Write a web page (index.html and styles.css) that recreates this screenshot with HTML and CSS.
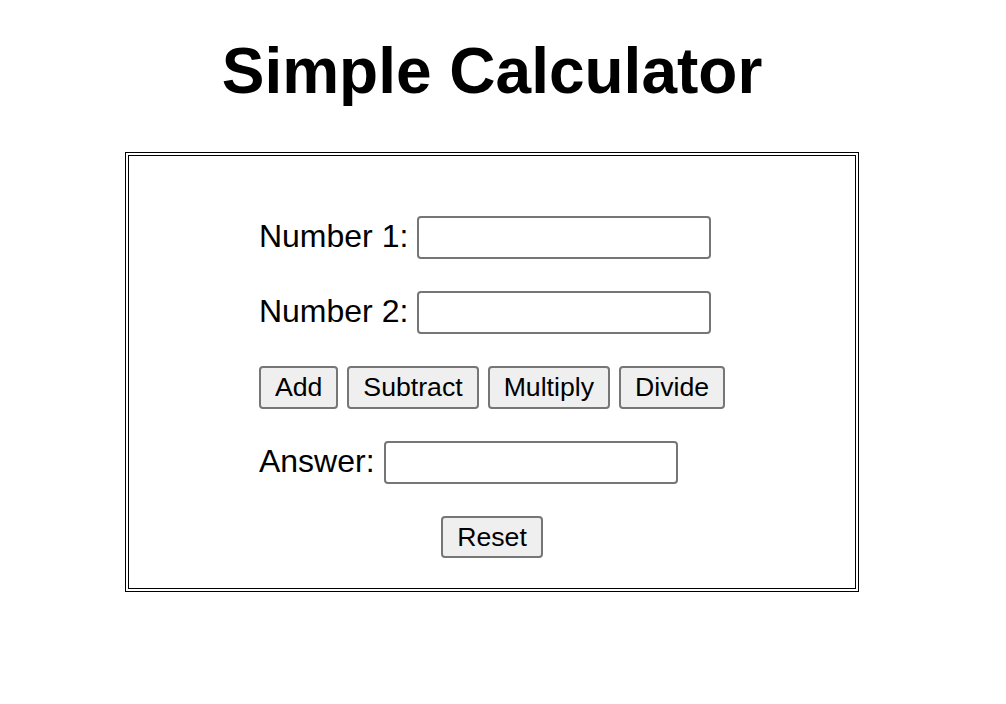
FILE: index.html
```html
<!DOCTYPE html>
<html lang="en">
<head>
<meta charset="utf-8">
<title>Simple Calculator</title>
<link rel="stylesheet" href="styles.css">
</head>
<body>
<div class="page">
  <h1 class="title">Simple Calculator</h1>
  <div class="box">
    <div class="form">
      <div class="row">
        <label class="label" for="n1">Number 1:</label>
        <input class="field" id="n1" type="text">
      </div>
      <div class="row">
        <label class="label" for="n2">Number 2:</label>
        <input class="field" id="n2" type="text">
      </div>
      <div class="row buttons">
        <button class="btn" type="button">Add</button>
        <button class="btn" type="button">Subtract</button>
        <button class="btn" type="button">Multiply</button>
        <button class="btn" type="button">Divide</button>
      </div>
      <div class="row">
        <label class="label" for="ans">Answer:</label>
        <input class="field" id="ans" type="text">
      </div>
      <div class="row reset-row">
        <button class="btn" type="button">Reset</button>
      </div>
    </div>
  </div>
</div>
</body>
</html>
```

FILE: styles.css
```css
html, body {
  margin: 0;
  padding: 0;
  background: #ffffff;
}

body {
  font-family: "Liberation Sans", Arial, sans-serif;
  color: #000000;
}

.page {
  width: 984px;
  display: flex;
  flex-direction: column;
  align-items: center;
}

.title {
  margin: 34px 0 44px;
  font-size: 64px;
  line-height: 74px;
  font-weight: bold;
  text-align: center;
}

.box {
  box-sizing: border-box;
  width: 734px;
  height: 440px;
  border: 4px double #000000;
  padding: 60px 0 0;
  display: flex;
  justify-content: center;
}

.form {
  display: flex;
  flex-direction: column;
  align-items: flex-start;
  gap: 32px;
}

.row {
  display: flex;
  align-items: center;
  height: 43px;
  gap: 9px;
}

.buttons {
  gap: 9px;
}

.reset-row {
  align-self: center;
  height: 42px;
}

.label {
  font-size: 32px;
  line-height: 37px;
  margin-bottom: 2px;
}

.field {
  box-sizing: border-box;
  width: 294px;
  height: 43px;
  margin: 0;
  border: 2px solid #767676;
  border-radius: 4px;
  background: #ffffff;
  font-family: "Liberation Sans", Arial, sans-serif;
  font-size: 26px;
  padding: 2px 4px;
}

.btn {
  box-sizing: border-box;
  height: 43px;
  margin: 0;
  padding: 0 14px;
  border: 2px solid #767676;
  border-radius: 4px;
  background: #efefef;
  color: #000000;
  font-family: "Liberation Sans", Arial, sans-serif;
  font-size: 26.67px;
  line-height: 1;
}

.reset-row .btn {
  height: 42px;
}
```
